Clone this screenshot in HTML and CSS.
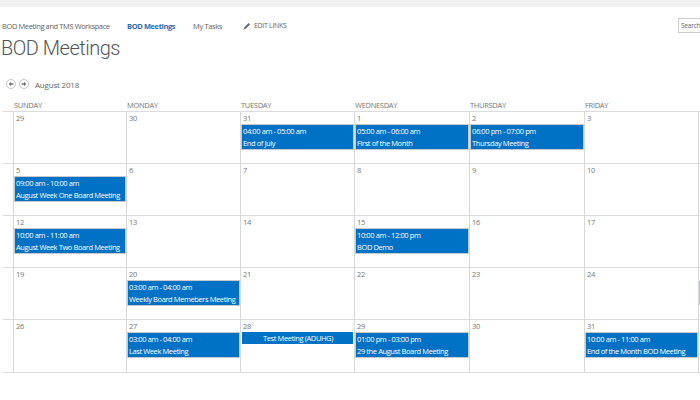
FILE: index.html
```html
<!DOCTYPE html>
<html lang="en">
<head>
<meta charset="utf-8">
<title>BOD Meetings</title>
<link rel="stylesheet" href="styles.css">
</head>
<body>
<div class="topbar"></div>
<header class="head">
  <nav class="nav">
    <a class="nav-site">BOD Meeting and TMS Workspace</a>
    <a class="nav-current">BOD Meetings</a>
    <a class="nav-tasks">My Tasks</a>
    <a class="nav-edit"><svg class="pencil" viewBox="0 0 8 8" width="8" height="8"><path d="M0.5 7.5 L1.2 5.4 L5.6 1 L7 2.4 L2.6 6.8 Z" fill="#666"/></svg>EDIT LINKS</a>
  </nav>
  <div class="search">Search</div>
</header>
<h1 class="title">BOD Meetings</h1>
<div class="month">
  <span class="arrow"><svg viewBox="0 0 10 10" width="10" height="10"><circle cx="5" cy="5" r="4.5" fill="#fff" stroke="#c4c4c4"/><path d="M2.6 5 L5 2.8 V4.2 H7.4 V5.8 H5 V7.2 Z" fill="#777"/></svg></span>
  <span class="arrow"><svg viewBox="0 0 10 10" width="10" height="10"><circle cx="5" cy="5" r="4.5" fill="#fff" stroke="#c4c4c4"/><path d="M7.4 5 L5 2.8 V4.2 H2.6 V5.8 H5 V7.2 Z" fill="#777"/></svg></span>
  <span class="month-label">August 2018</span>
</div>
<div class="days">
  <span>SUNDAY</span><span>MONDAY</span><span>TUESDAY</span><span>WEDNESDAY</span><span>THURSDAY</span><span>FRIDAY</span><span></span>
</div>
<div class="grid">
  <div class="gutter"></div>
  <div class="cell"><div class="num">29</div></div>
  <div class="cell"><div class="num">30</div></div>
  <div class="cell"><div class="num">31</div><div class="ev"><span>04:00 am - 05:00 am</span><span>End of July</span></div></div>
  <div class="cell"><div class="num">1</div><div class="ev"><span>05:00 am - 06:00 am</span><span>First of the Month</span></div></div>
  <div class="cell"><div class="num">2</div><div class="ev"><span>06:00 pm - 07:00 pm</span><span>Thursday Meeting</span></div></div>
  <div class="cell"><div class="num">3</div></div>
  <div class="cell"></div>

  <div class="gutter"></div>
  <div class="cell"><div class="num">5</div><div class="ev"><span>09:00 am - 10:00 am</span><span>August Week One Board Meeting</span></div></div>
  <div class="cell"><div class="num">6</div></div>
  <div class="cell"><div class="num">7</div></div>
  <div class="cell"><div class="num">8</div></div>
  <div class="cell"><div class="num">9</div></div>
  <div class="cell"><div class="num">10</div></div>
  <div class="cell"></div>

  <div class="gutter"></div>
  <div class="cell"><div class="num">12</div><div class="ev"><span>10:00 am - 11:00 am</span><span>August Week Two Board Meeting</span></div></div>
  <div class="cell"><div class="num">13</div></div>
  <div class="cell"><div class="num">14</div></div>
  <div class="cell"><div class="num">15</div><div class="ev"><span>10:00 am - 12:00 pm</span><span>BOD Demo</span></div></div>
  <div class="cell"><div class="num">16</div></div>
  <div class="cell"><div class="num">17</div></div>
  <div class="cell"></div>

  <div class="gutter"></div>
  <div class="cell"><div class="num">19</div></div>
  <div class="cell"><div class="num">20</div><div class="ev"><span>03:00 am - 04:00 am</span><span>Weekly Board Memebers Meeting</span></div></div>
  <div class="cell"><div class="num">21</div></div>
  <div class="cell"><div class="num">22</div></div>
  <div class="cell"><div class="num">23</div></div>
  <div class="cell"><div class="num">24</div></div>
  <div class="cell"><div class="scroll-mark"></div></div>

  <div class="gutter"></div>
  <div class="cell"><div class="num">26</div></div>
  <div class="cell"><div class="num">27</div><div class="ev"><span>03:00 am - 04:00 am</span><span>Last Week Meeting</span></div></div>
  <div class="cell"><div class="num">28</div><div class="ev ev-short"><span>Test Meeting (ADUHG)</span></div></div>
  <div class="cell"><div class="num">29</div><div class="ev"><span>01:00 pm - 03:00 pm</span><span>29 the August Board Meeting</span></div></div>
  <div class="cell"><div class="num">30</div></div>
  <div class="cell"><div class="num">31</div><div class="ev"><span>10:00 am - 11:00 am</span><span>End of the Month BOD Meeting</span></div></div>
  <div class="cell"></div>
</div>
</body>
</html>
```
FILE: styles.css
```css
html, body { margin: 0; padding: 0; height: 400px; overflow: hidden; background: #fff; }
body { font-family: "Open Sans", "Noto Sans", sans-serif; color: #666; font-size: 7.5px; width: 700px; }

.topbar { height: 7px; background: #f1f1f1; }

.head { display: flex; align-items: center; height: 15px; margin-top: 11px; position: relative; }
.nav { display: flex; align-items: center; padding-left: 2px; flex: 1; letter-spacing: -0.4px; white-space: nowrap; }
.nav-site { width: 125px; }
.nav-current { width: 66px; color: #2b6cb0; font-weight: 700; letter-spacing: -0.4px; }
.nav-tasks { width: 50px; letter-spacing: -0.35px; }
.nav-edit { display: flex; align-items: center; gap: 3px; font-size: 7px; letter-spacing: -0.3px; }
.search { width: 22px; height: 15px; box-sizing: border-box; border: 1px solid #ccc; border-right: 0; padding-left: 2px; line-height: 13px; flex: none; font-size: 6.5px; letter-spacing: -0.2px; }

.title { margin: 2px 0 0 1px; font-family: Roboto, "Open Sans", sans-serif; font-size: 20px; line-height: 26px; font-weight: 300; color: #555; letter-spacing: -0.5px; white-space: nowrap; }

.month { display: flex; align-items: center; gap: 3px; margin: 16px 0 0 6px; height: 14px; }
.arrow { display: flex; }
.month-label { margin-left: 3px; font-size: 8px; color: #666; letter-spacing: -0.2px; }

.days { display: grid; grid-template-columns: 113px 114px 114px 115px 115px 114px 2px; margin: 8px 0 0 14px; height: 12px; line-height: 12px; font-size: 7.5px; letter-spacing: -0.3px; color: #777; }

.grid { display: grid; grid-template-columns: 10px 113px 114px 114px 115px 115px 114px 20px; grid-auto-rows: 52px; margin-left: 3px; width: 697px; overflow: hidden; border-top: 1px solid #dcdcdc; border-bottom: 1px solid #dcdcdc; }
.gutter, .cell { box-sizing: border-box; border-bottom: 1px solid #dcdcdc; }
.grid > :nth-last-child(-n+8) { border-bottom: 0; }
.cell { border-left: 1px solid #d8d8d8; padding: 0 0 0 1px; position: relative; min-width: 0; }
.num { height: 12px; line-height: 13px; padding-left: 1px; font-size: 7.5px; color: #777; letter-spacing: -0.2px; }

.ev { display: flex; flex-direction: column; justify-content: space-between; height: 26px; box-sizing: border-box; padding: 1px 0 0; background: #0072c6; border: 1px solid #c9c9c9; color: #fff; margin-left: -1px; line-height: 11px; font-size: 7.5px; letter-spacing: -0.4px; white-space: nowrap; }
.ev span { padding-left: 1px; }
.ev-short { height: 12px; padding: 0; text-align: center; border: 0; margin: 0 1px 0 0; line-height: 12px; }

.scroll-mark { position: absolute; left: 0; top: 13px; width: 2px; height: 24px; background: #b9c4d0; }
.pencil { display: block; }
```
